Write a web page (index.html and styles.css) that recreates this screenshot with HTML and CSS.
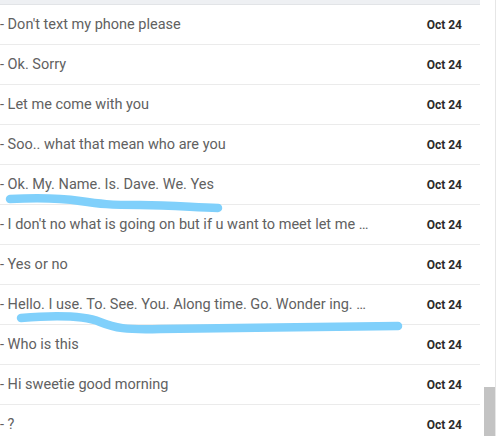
FILE: index.html
```html
<!DOCTYPE html>
<html>
<head>
<meta charset="utf-8">
<link rel="stylesheet" href="styles.css">
</head>
<body>
<div class="page">
  <div class="list">
    <div class="band"></div>
    <div class="row"><span class="msg">- Don't text my phone please</span><span class="date">Oct 24</span></div>
    <div class="row"><span class="msg">- Ok. Sorry</span><span class="date">Oct 24</span></div>
    <div class="row"><span class="msg">- Let me come with you</span><span class="date">Oct 24</span></div>
    <div class="row"><span class="msg">- Soo.. what that mean who are you</span><span class="date">Oct 24</span></div>
    <div class="row"><span class="msg">- Ok. My. Name. Is. Dave. We. Yes</span><span class="date">Oct 24</span></div>
    <div class="row"><span class="msg">- I don't no what is going on but if u want to meet let me …</span><span class="date">Oct 24</span></div>
    <div class="row"><span class="msg">- Yes or no</span><span class="date">Oct 24</span></div>
    <div class="row"><span class="msg">- Hello. I use. To. See. You. Along time. Go. Wonder ing. …</span><span class="date">Oct 24</span></div>
    <div class="row"><span class="msg">- Who is this</span><span class="date">Oct 24</span></div>
    <div class="row"><span class="msg">- Hi sweetie good morning</span><span class="date">Oct 24</span></div>
    <div class="row"><span class="msg">- ?</span><span class="date">Oct 24</span></div>
  </div>
  <div class="scroll">
    <div class="track"><div class="thumb"></div></div>
  </div>
  <svg class="ink" width="500" height="436" viewBox="0 0 500 436">
    <path d="M10 199 C30 198 60 198 80 201 C100 204 110 205 140 205 C170 205 190 207 218 208" />
    <path d="M21 318 C45 316 80 314 100 322 C115 328 125 330 160 329 C230 328 330 327 398 326" />
  </svg>
</div>
</body>
</html>
```
FILE: styles.css
```css
html, body {
  margin: 0;
  padding: 0;
  background: #ffffff;
}
.page {
  position: relative;
  width: 500px;
  height: 436px;
  overflow: hidden;
  display: flex;
  font-family: Roboto, "Liberation Sans", sans-serif;
}
.list {
  width: 480px;
  flex: none;
}
.band {
  height: 4px;
  background: #eef0f3;
  border-bottom: 1px solid #e2e4e7;
}
.row {
  height: 39px;
  border-bottom: 1px solid #ebebeb;
  display: flex;
  align-items: center;
  justify-content: space-between;
  padding-right: 18px;
}
.msg {
  font-size: 14.5px;
  color: #616161;
  white-space: nowrap;
}
.date {
  font-size: 12px;
  font-weight: 700;
  color: #2a2a2a;
}
.scroll {
  flex: 1;
  display: flex;
}
.track {
  width: 15px;
  border-right: 1px solid #e6e6e6;
  display: flex;
  flex-direction: column;
  justify-content: flex-end;
  align-items: flex-end;
}
.thumb {
  width: 11px;
  height: 49px;
  background: #c3c3c3;
}
.ink {
  position: absolute;
  left: 0;
  top: 0;
  pointer-events: none;
}
.ink path {
  fill: none;
  stroke: #80d0fb;
  stroke-width: 8.5;
  stroke-linecap: round;
}
```
